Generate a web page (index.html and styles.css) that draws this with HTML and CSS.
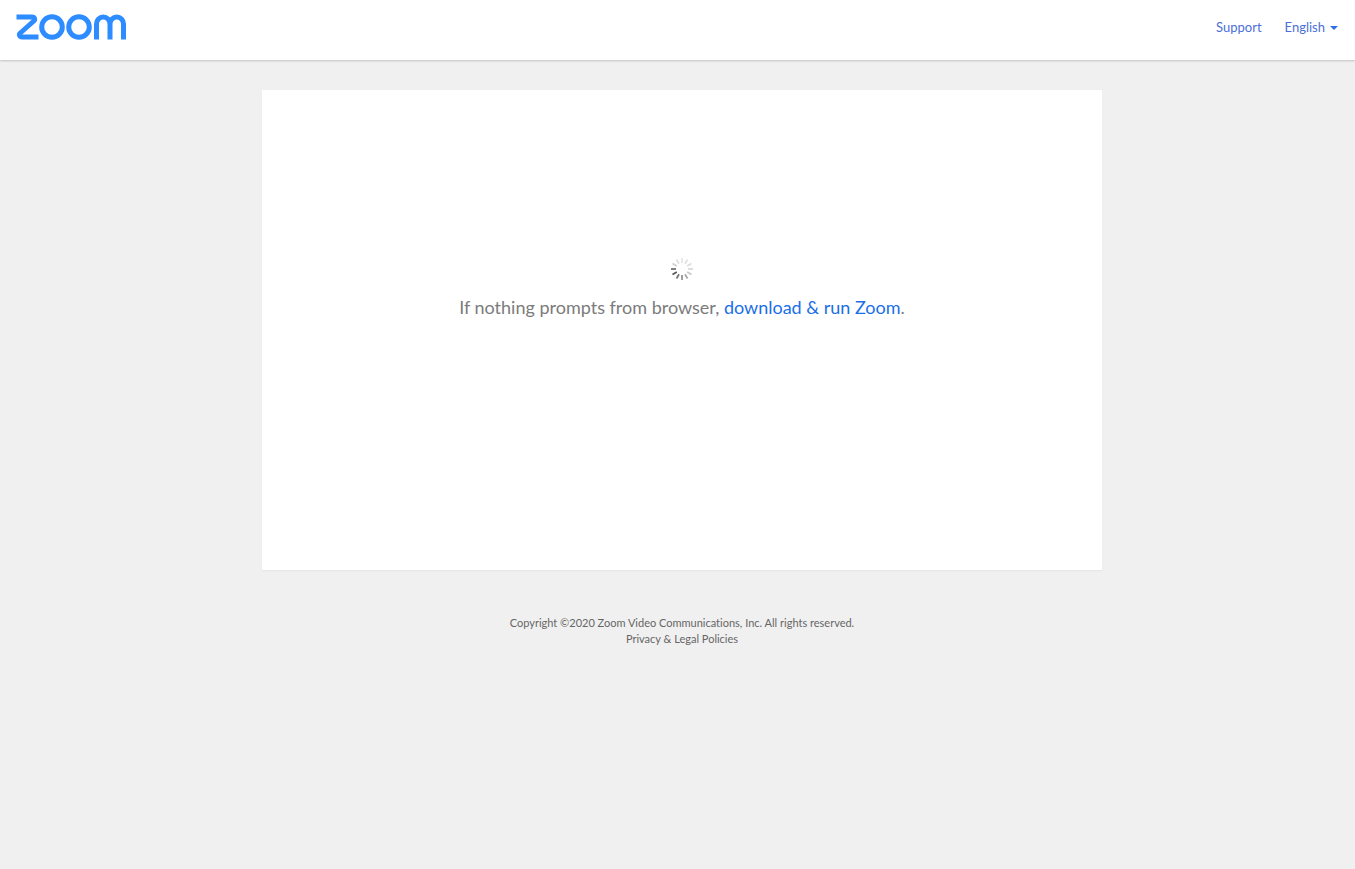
FILE: index.html
```html
<!DOCTYPE html>
<html lang="en">
<head>
<meta charset="utf-8">
<title>Launch Meeting - Zoom</title>
<link rel="stylesheet" href="styles.css">
</head>
<body>
<header class="topbar">
  <a class="logo" href="#" aria-label="Zoom">
    <svg width="112" height="26" viewBox="0 0 112 26">
      <g fill="none" stroke="#2d8cff" stroke-width="5">
        <path d="M1.500 3h15.500c2.600 0 3.500 2.300 1.800 4L5.300 19c-1.700 1.700-.8 4 1.800 4H23.500" stroke-linejoin="round"/>
        <circle cx="37" cy="13" r="10.300"/>
        <circle cx="64" cy="13" r="10.300"/>
        <path d="M81.500 25.500V10a6.750 7 0 0 1 13.500 0v15.500M95 10a6.750 7 0 0 1 13.500 0v15.500"/>
      </g>
    </svg>
  </a>
  <nav class="topnav">
    <a href="#">Support</a>
    <a href="#">English<span class="caret"></span></a>
  </nav>
</header>
<main class="page">
  <section class="card">
    <svg class="spinner" width="24" height="24" viewBox="0 0 24 24">
      <g stroke-width="1.700" stroke-linecap="butt">
        <path stroke="#e6e6e6" d="M12 1v5"/>
        <path stroke="#e0e0e0" d="M17.500 2.500l-2.500 4.300"/>
        <path stroke="#dcdcdc" d="M21.500 6.500l-4.300 2.500"/>
        <path stroke="#d8d8d8" d="M23 12h-5"/>
        <path stroke="#c8c8c8" d="M21.500 17.500l-4.300-2.500"/>
        <path stroke="#a8a8a8" d="M17.500 21.500l-2.500-4.300"/>
        <path stroke="#909090" d="M12 23v-5"/>
        <path stroke="#707070" d="M6.500 21.500l2.500-4.300"/>
        <path stroke="#555555" d="M2.500 17.500l4.300-2.500"/>
        <path stroke="#6a6a6a" d="M1 12h5"/>
        <path stroke="#d0d0d0" d="M2.500 6.500l4.300 2.500"/>
        <path stroke="#e0e0e0" d="M6.500 2.500l2.500 4.300"/>
      </g>
    </svg>
    <p class="prompt">If nothing prompts from browser, <a href="#">download &amp; run Zoom</a>.</p>
  </section>
  <footer class="legal">
    <div>Copyright ©2020 Zoom Video Communications, Inc. All rights reserved.</div>
    <div><a href="#">Privacy &amp; Legal Policies</a></div>
  </footer>
</main>
</body>
</html>
```

FILE: styles.css
```css
* { box-sizing: border-box; }
html, body { height: 100%; }
body {
  margin: 0;
  background: #f0f0f0;
  font-family: Lato, "Open Sans", sans-serif;
  font-variant-ligatures: none;
  color: #747487;
}
a { text-decoration: none; }
.topbar {
  height: 60px;
  background: #fff;
  box-shadow: 0 1px 2px rgba(0, 0, 0, .2);
  display: flex;
  align-items: center;
  justify-content: space-between;
  padding: 0 17px 0 15px;
}
.logo { display: flex; margin-top: -7px; }
.topnav {
  display: flex;
  gap: 23px;
  font-size: 13px;
  line-height: 18px;
  margin-top: -7px;
}
.topnav a { color: #4a6fd8; }
.caret {
  display: inline-block;
  width: 0;
  height: 0;
  margin-left: 5px;
  vertical-align: 2px;
  border-top: 4px solid #2d6fe0;
  border-left: 4px solid transparent;
  border-right: 4px solid transparent;
}
.page {
  padding: 30px 0 0 9px;
  display: flex;
  flex-direction: column;
  align-items: center;
}
.card {
  width: 840px;
  height: 481px;
  background: #fff;
  border-bottom: 1px solid #e6e6e6;
  box-shadow: 0 0 1px rgba(0, 0, 0, .06);
  display: flex;
  flex-direction: column;
  align-items: center;
  padding-top: 167px;
}
.spinner { display: block; }
.prompt {
  margin: 13px 0 0;
  font-size: 18px;
  line-height: 26px;
  color: #7b7b7b;
}
.prompt a { color: #1a6fe8; }
.legal {
  margin-top: 44px;
  font-size: 11px;
  line-height: 16px;
  text-align: center;
  color: #666;
}
.legal a { color: #666; }
```
